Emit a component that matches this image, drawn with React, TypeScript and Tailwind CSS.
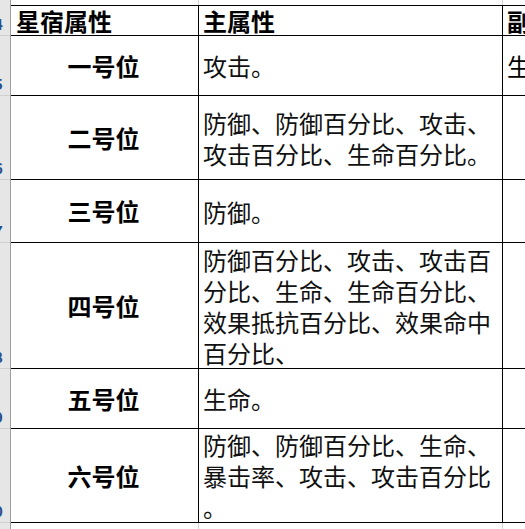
import React from "react";

type Row = {
  num: string;
  label: string;
  lines: string[];
  sub: string;
  h: string;
  header?: boolean;
};

const rows: Row[] = [
  { num: "4", label: "星宿属性", lines: ["主属性"], sub: "副", h: "h-[30px]", header: true },
  { num: "5", label: "一号位", lines: ["攻击。"], sub: "生", h: "h-[60px]" },
  { num: "6", label: "二号位", lines: ["防御、防御百分比、攻击、", "攻击百分比、生命百分比。"], sub: "", h: "h-[84px]" },
  { num: "7", label: "三号位", lines: ["防御。"], sub: "", h: "h-[63px]" },
  {
    num: "8",
    label: "四号位",
    lines: ["防御百分比、攻击、攻击百", "分比、生命、生命百分比、", "效果抵抗百分比、效果命中", "百分比、"],
    sub: "",
    h: "h-[126px]",
  },
  { num: "9", label: "五号位", lines: ["生命。"], sub: "", h: "h-[60px]" },
  { num: "0", label: "六号位", lines: ["防御、防御百分比、生命、", "暴击率、攻击、攻击百分比", "。"], sub: "", h: "h-[94px]" },
];

export default function App() {
  return (
    <div className="w-[525px] h-[529px] overflow-hidden bg-white flex font-['Noto_Sans_CJK_SC',sans-serif] text-black">
      {/* row header strip (scrolled, only the right edge of the numbers shows) */}
      <div className="w-[11px] shrink-0 bg-[#e6e6e6] border-r border-[#9e9e9e] flex flex-col overflow-hidden">
        <div className="h-[6px] shrink-0" />
        {rows.map((r) => (
          <div
            key={r.num}
            className={`${r.h} shrink-0 border-b border-[#d0d0d0] flex items-end justify-start overflow-hidden`}
          >
            <span className="text-[15px] leading-[22px] font-bold text-[#2b4f86] ml-[-6px]">{r.num}</span>
          </div>
        ))}
      </div>

      {/* sheet */}
      <div className="flex-1 flex flex-col">
        <div className="h-[5px] shrink-0 flex">
          <div className="w-[188px] shrink-0 border-r border-[#d4d4d4]" />
          <div className="w-[304px] shrink-0 border-r border-[#d4d4d4]" />
        </div>
        <div className="border-t border-black">
          {rows.map((r) => (
            <div key={r.num} className={`${r.h} shrink-0 flex border-b border-black`}>
              <div
                className={`w-[188px] shrink-0 border-r border-black flex items-center text-[24px] font-bold ${
                  r.header ? "justify-start pl-[5px]" : "justify-center pr-[2px]"
                }`}
              >
                {r.label}
              </div>
              <div
                className={`w-[304px] shrink-0 border-r border-black flex flex-col justify-center pl-[4px] text-[24px] leading-[31px] whitespace-nowrap ${
                  r.header ? "font-bold" : "font-normal text-[#111]"
                }`}
              >
                {r.lines.map((l, i) => (
                  <span key={i}>{l}</span>
                ))}
              </div>
              <div
                className={`flex-1 flex items-center pl-[4px] text-[24px] whitespace-nowrap overflow-hidden ${
                  r.header ? "font-bold" : "font-normal"
                }`}
              >
                {r.sub}
              </div>
            </div>
          ))}
        </div>
        <div className="flex-1 flex">
          <div className="w-[188px] shrink-0 border-r border-[#d4d4d4]" />
          <div className="w-[304px] shrink-0 border-r border-[#d4d4d4]" />
        </div>
      </div>
    </div>
  );
}
